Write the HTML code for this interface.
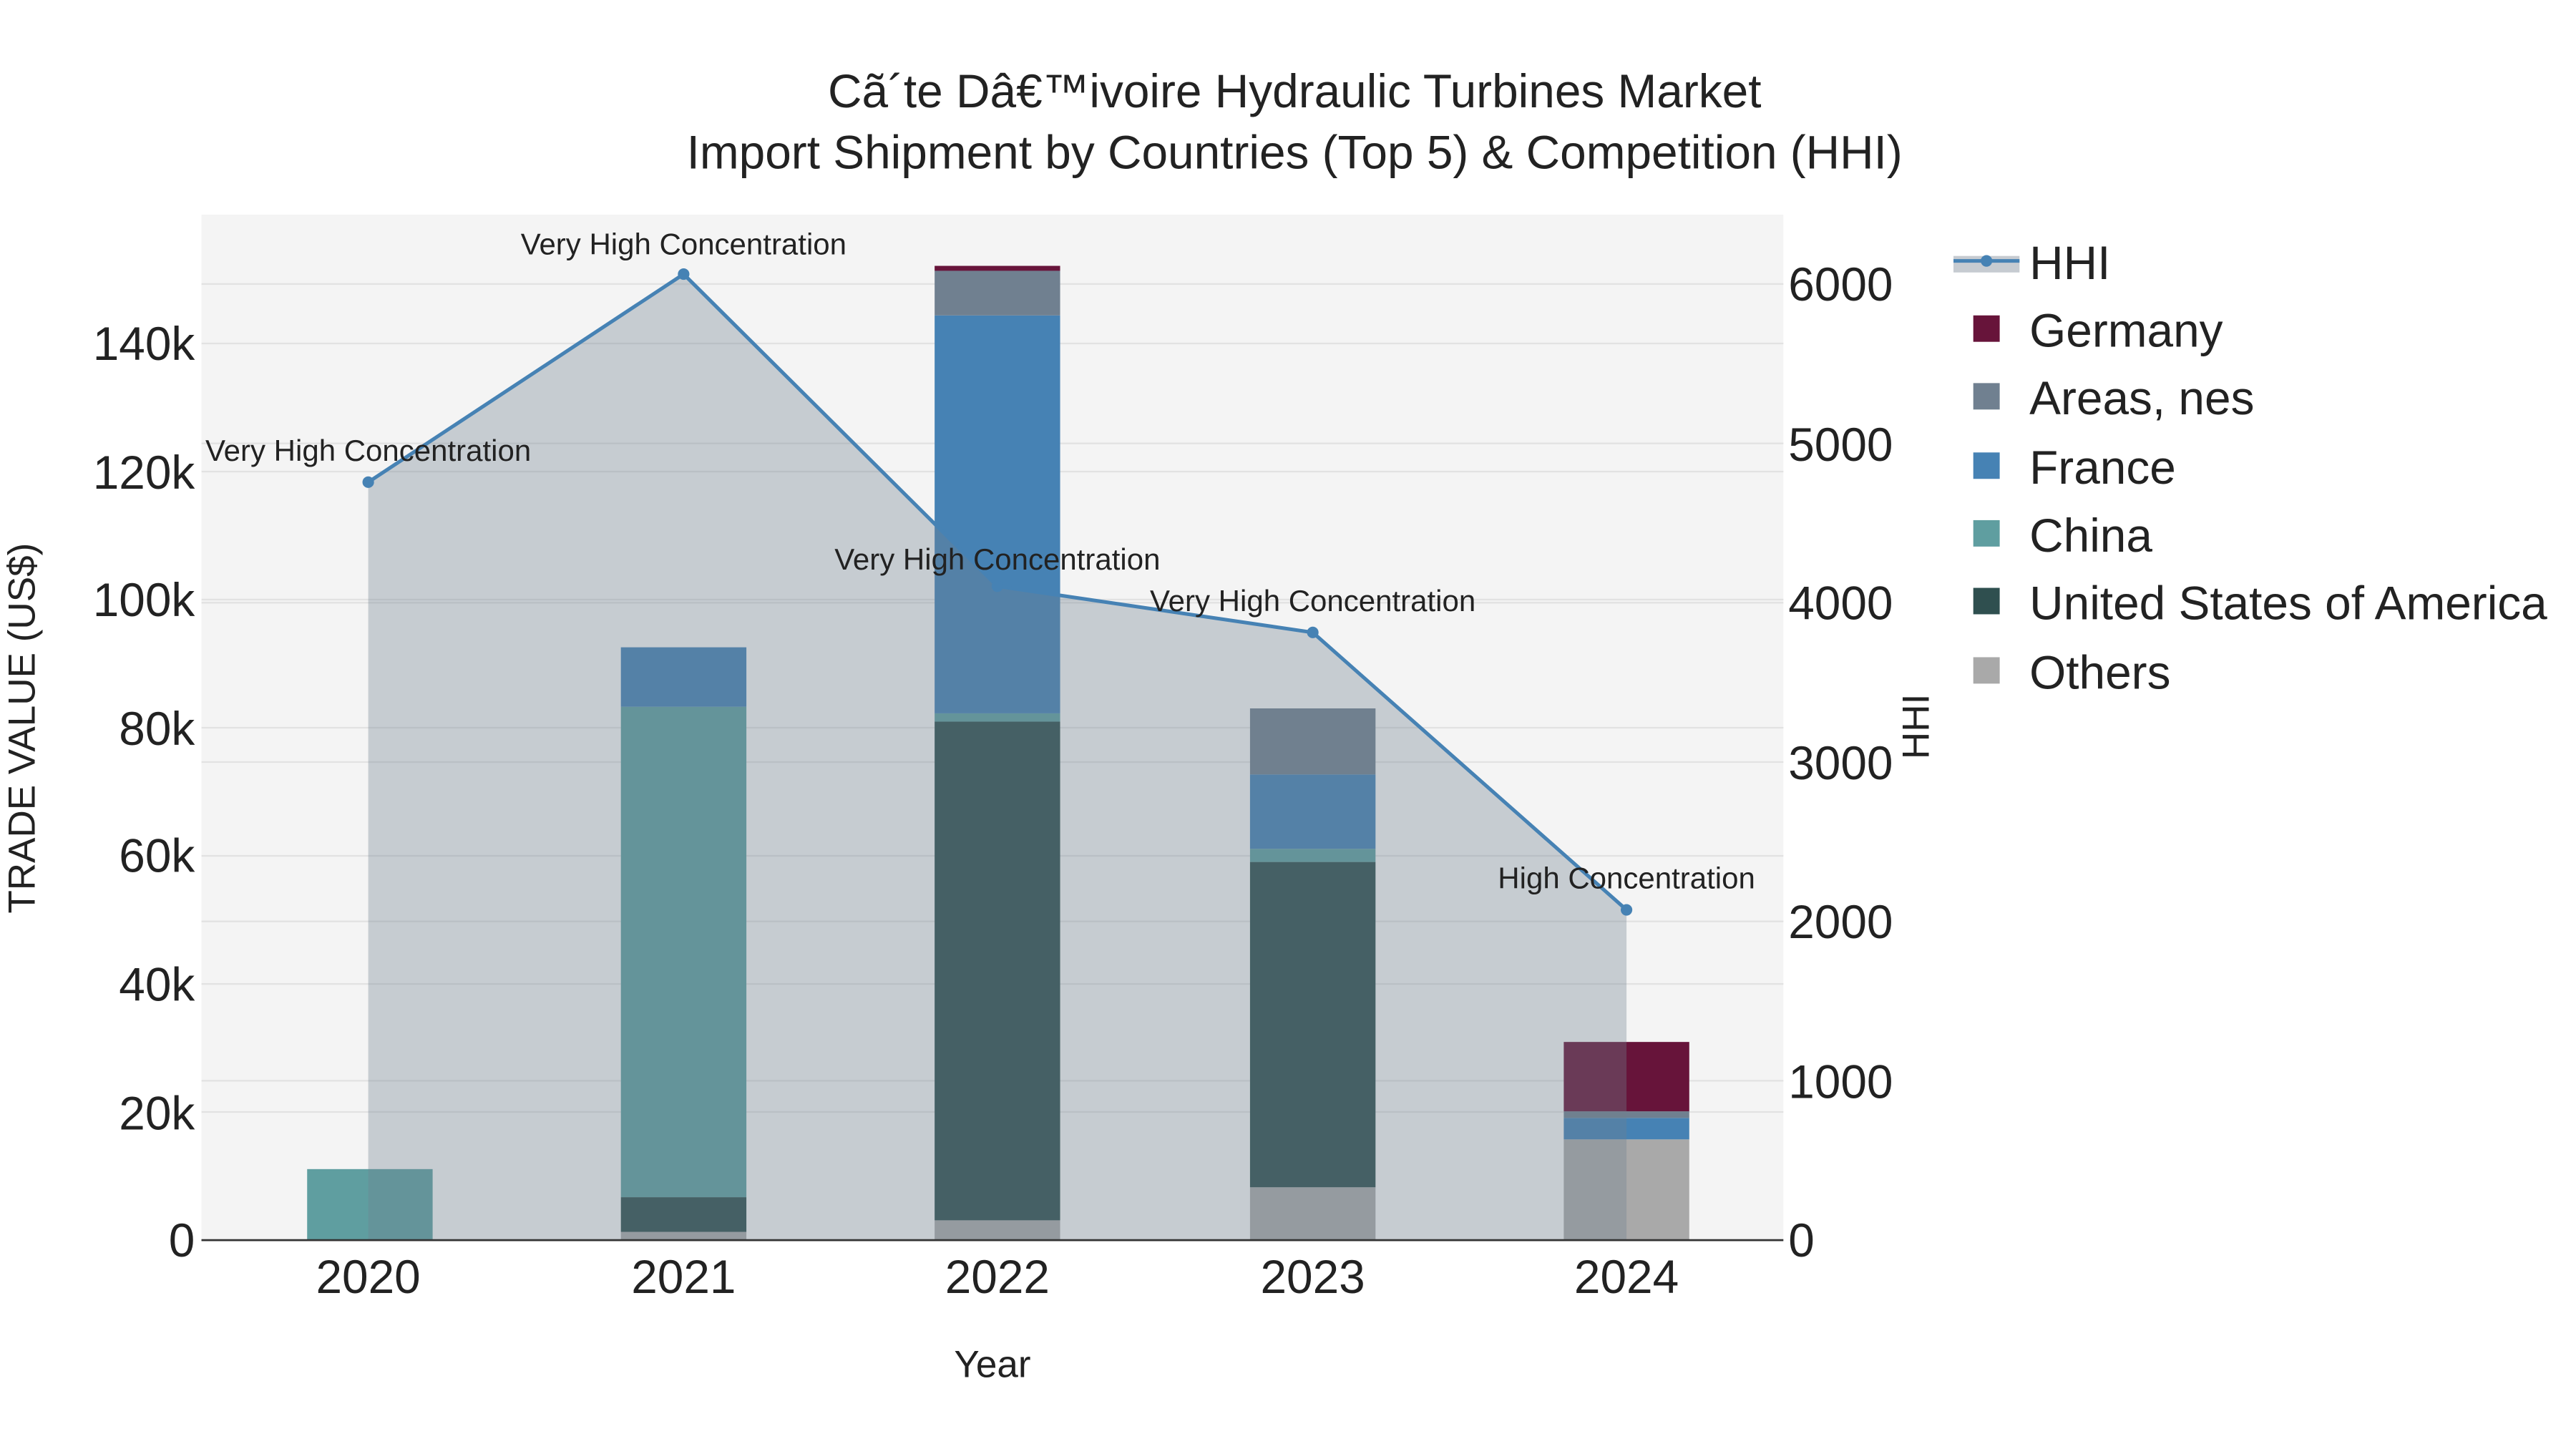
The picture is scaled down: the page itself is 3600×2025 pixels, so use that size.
<!DOCTYPE html>
<html><head><meta charset="utf-8"><style>html,body{margin:0;padding:0;background:#fff}svg{display:block}text{font-family:"Liberation Sans",sans-serif;fill:#222}</style></head><body>
<svg width="3600" height="2025" viewBox="0 0 1560 877.5" xmlns="http://www.w3.org/2000/svg">
<rect width="1560" height="878" fill="#fff"/>
<rect x="122" y="130" width="958" height="621" fill="#f4f4f4"/>
<g stroke="#e2e2e2" stroke-width="1">
<line x1="122" x2="1080" y1="673.4" y2="673.4"/><line x1="122" x2="1080" y1="595.9" y2="595.9"/><line x1="122" x2="1080" y1="518.3" y2="518.3"/><line x1="122" x2="1080" y1="440.7" y2="440.7"/><line x1="122" x2="1080" y1="363.1" y2="363.1"/><line x1="122" x2="1080" y1="285.6" y2="285.6"/><line x1="122" x2="1080" y1="208" y2="208"/>
<line x1="122" x2="1080" y1="654.5" y2="654.5"/><line x1="122" x2="1080" y1="558" y2="558"/><line x1="122" x2="1080" y1="461.5" y2="461.5"/><line x1="122" x2="1080" y1="365" y2="365"/><line x1="122" x2="1080" y1="268.5" y2="268.5"/><line x1="122" x2="1080" y1="172" y2="172"/>
</g>
<rect x="186" y="708" width="76" height="43" fill="#5f9ea0"/>
<rect x="376" y="746" width="76" height="5" fill="#a9a9a9"/>
<rect x="376" y="725" width="76" height="21" fill="#2f4f4f"/>
<rect x="376" y="428" width="76" height="297" fill="#5f9ea0"/>
<rect x="376" y="392" width="76" height="36" fill="#4682b4"/>
<rect x="566" y="739" width="76" height="12" fill="#a9a9a9"/>
<rect x="566" y="437" width="76" height="302" fill="#2f4f4f"/>
<rect x="566" y="432" width="76" height="5" fill="#5f9ea0"/>
<rect x="566" y="191" width="76" height="241" fill="#4682b4"/>
<rect x="566" y="164" width="76" height="27" fill="#708090"/>
<rect x="566" y="161" width="76" height="3" fill="#67143a"/>
<rect x="757" y="719" width="76" height="32" fill="#a9a9a9"/>
<rect x="757" y="522" width="76" height="197" fill="#2f4f4f"/>
<rect x="757" y="514" width="76" height="8" fill="#5f9ea0"/>
<rect x="757" y="469" width="76" height="45" fill="#4682b4"/>
<rect x="757" y="429" width="76" height="40" fill="#708090"/>
<rect x="947" y="690" width="76" height="61" fill="#a9a9a9"/>
<rect x="947" y="677" width="76" height="13" fill="#4682b4"/>
<rect x="947" y="673" width="76" height="4" fill="#708090"/>
<rect x="947" y="631" width="76" height="42" fill="#67143a"/>
<path d="M223,751 L223,292 L414,166 L604,355 L795,383 L985,551 L985,751 Z" fill="#708090" fill-opacity="0.35"/>
<polyline points="223,292 414,166 604,355 795,383 985,551" fill="none" stroke="#4682b4" stroke-width="2.2"/>
<g fill="#4682b4"><circle cx="223" cy="292" r="3.5"/><circle cx="414" cy="166" r="3.5"/><circle cx="604" cy="355" r="3.5"/><circle cx="795" cy="383" r="3.5"/><circle cx="985" cy="551" r="3.5"/></g>
<line x1="122" x2="1080" y1="751" y2="751" stroke="#333" stroke-width="1.2"/>
<g font-size="18.2" text-anchor="middle">
<text x="223" y="279">Very High Concentration</text>
<text x="414" y="154">Very High Concentration</text>
<text x="604" y="345">Very High Concentration</text>
<text x="795" y="370">Very High Concentration</text>
<text x="985" y="538">High Concentration</text>
</g>
<g font-size="28.5" text-anchor="end">
<text x="118" y="761">0</text><text x="118" y="684">20k</text><text x="118" y="606">40k</text><text x="118" y="528">60k</text><text x="118" y="451">80k</text><text x="118" y="373">100k</text><text x="118" y="296">120k</text><text x="118" y="218">140k</text>
</g>
<g font-size="28.5" text-anchor="start">
<text x="1083" y="761">0</text><text x="1083" y="665">1000</text><text x="1083" y="568">2000</text><text x="1083" y="472">3000</text><text x="1083" y="375">4000</text><text x="1083" y="279">5000</text><text x="1083" y="182">6000</text>
</g>
<g font-size="28.5" text-anchor="middle">
<text x="223" y="783">2020</text><text x="414" y="783">2021</text><text x="604" y="783">2022</text><text x="795" y="783">2023</text><text x="985" y="783">2024</text>
</g>
<text x="601" y="834" font-size="23" text-anchor="middle">Year</text>
<text transform="translate(21,441) rotate(-90)" font-size="23" text-anchor="middle">TRADE VALUE (US$)</text>
<text transform="translate(1168,440) rotate(-90)" font-size="23" text-anchor="middle">HHI</text>
<text x="784" y="65" font-size="28.5" text-anchor="middle">Cã´te Dâ€™ivoire Hydraulic Turbines Market</text>
<text x="784" y="102" font-size="28.5" text-anchor="middle">Import Shipment by Countries (Top 5) &amp; Competition (HHI)</text>
<rect x="1183" y="155" width="40" height="10" fill="#c6cbd1"/>
<line x1="1183" x2="1223" y1="158" y2="158" stroke="#4682b4" stroke-width="2.2"/>
<circle cx="1203" cy="158" r="3.5" fill="#4682b4"/>
<rect x="1195" y="191" width="16" height="16" fill="#67143a"/>
<rect x="1195" y="232" width="16" height="16" fill="#708090"/>
<rect x="1195" y="274" width="16" height="16" fill="#4682b4"/>
<rect x="1195" y="315" width="16" height="16" fill="#5f9ea0"/>
<rect x="1195" y="356" width="16" height="16" fill="#2f4f4f"/>
<rect x="1195" y="398" width="16" height="16" fill="#a9a9a9"/>
<g font-size="28.5">
<text x="1229" y="169">HHI</text><text x="1229" y="210">Germany</text><text x="1229" y="251">Areas, nes</text><text x="1229" y="293">France</text><text x="1229" y="334">China</text><text x="1229" y="375">United States of America</text><text x="1229" y="417">Others</text>
</g>
</svg>
</body></html>
